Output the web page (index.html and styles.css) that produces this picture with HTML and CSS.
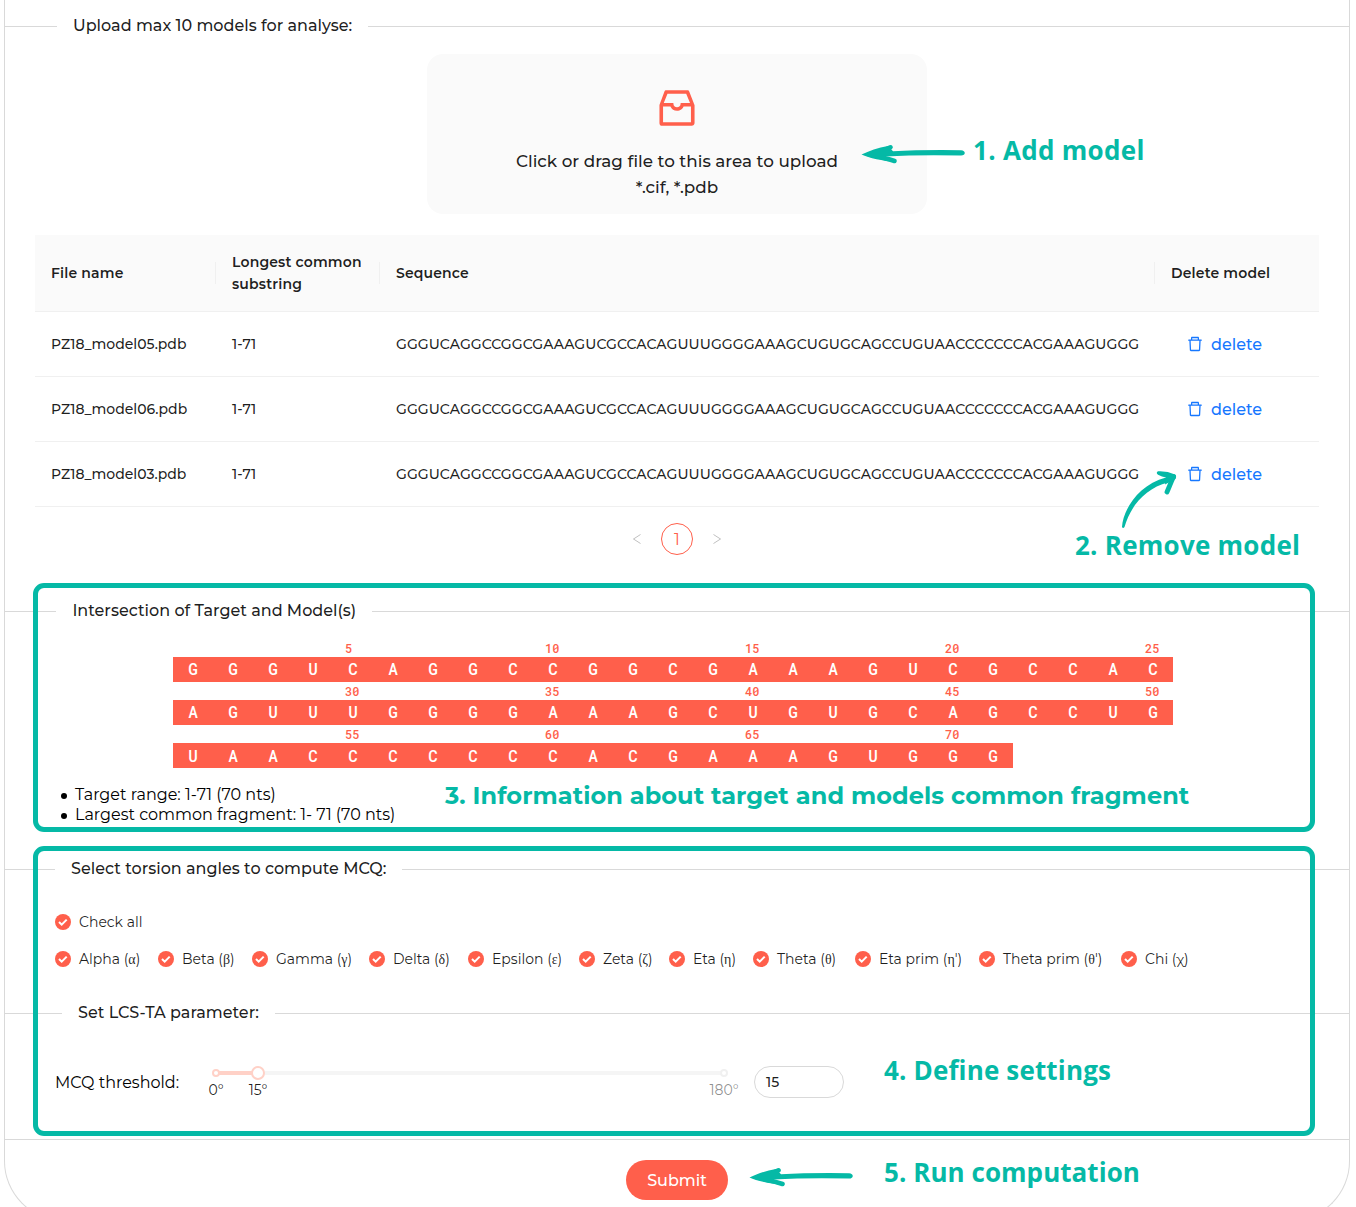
FILE: index.html
```html
<!DOCTYPE html>
<html lang="en">
<head>
<meta charset="utf-8">
<title>Model upload</title>
<link rel="stylesheet" href="styles.css">
</head>
<body>
<svg class="defs" aria-hidden="true">
  <symbol id="trash" viewBox="64 64 896 896"><path d="M360 184h-8c4.400 0 8-3.600 8-8v8h304v-8c0 4.400 3.600 8 8 8h-8v72h72v-80c0-35.300-28.700-64-64-64H352c-35.300 0-64 28.700-64 64v80h72v-72zm504 72H160c-17.700 0-32 14.300-32 32v32c0 4.400 3.600 8 8 8h60.400l24.700 523c1.600 34.100 29.800 61 63.900 61h454c34.200 0 62.300-26.800 63.900-61l24.700-523H888c4.400 0 8-3.600 8-8v-32c0-17.700-14.300-32-32-32zM731.300 840H292.700l-24.200-512h487l-24.200 512z"/></symbol>
  <symbol id="check" viewBox="0 0 16 16"><circle cx="8" cy="8" r="8"/><path d="M4 8l2.700 2.700 5-5.100" fill="none" stroke="#fff" stroke-width="2"/></symbol>
  <symbol id="arrow" viewBox="0 0 106 22"><path d="M8 11.500C18 9 25 7 29.500 4.300M8 11.500C18 13.500 26 15.500 33.500 18" fill="none" stroke="#05b9a6" stroke-width="4.600" stroke-linecap="round"/><path d="M.5 11.500C8 8 17 4.500 27 3L32 8.200Q60 6.700 100 7.200C105 7.500 105 12.300 100 12.600Q60 11.500 24 13.600L34 19C22 18 8 15 .5 11.500Z" fill="#05b9a6"/></symbol>
</svg>
<main class="panel">
  <div class="divider divider-upload"><span>Upload max 10 models for analyse:</span></div>

  <section class="dropzone">
    <svg class="inbox" viewBox="0 0 1024 1024"><path d="M885.200 446.300l-.2-.8-112.200-285.100c-5-16.100-19.900-27.200-36.800-27.200H281.200c-17 0-32.100 11.300-36.900 27.600L139.400 443l-.3.7-.2.8c-1.300 4.900-1.700 9.900-1 14.800-.1 1.600-.2 3.200-.2 4.800V830a60.900 60.900 0 0060.800 60.800h627.200c33.500 0 60.800-27.300 60.900-60.800V464.100c0-1.300 0-2.600-.1-3.700.4-4.900 0-9.600-1.300-14.100zm-295.800-43l-.3 15.700c-.8 44.900-31.800 75.100-77.100 75.100-22.100 0-41.100-7.100-54.800-20.600S436 441.200 435.600 419l-.3-15.700H229.500L309 210h399.200l81.700 193.300H589.400zm-375 76.800h157.300c24.300 57.100 76 90.800 140.400 90.800 33.700 0 65-9.400 90.300-27.200 22.200-15.600 39.500-37.400 50.700-63.600h156.500V814H214.400V480.100z"/></svg>
    <p>Click or drag file to this area to upload</p>
    <p>*.cif, *.pdb</p>
  </section>

  <table class="models">
    <thead>
      <tr><th class="c-name">File name</th><th class="c-lcs">Longest common substring</th><th class="c-seq">Sequence</th><th class="c-del">Delete model</th></tr>
    </thead>
    <tbody>
      <tr><td>PZ18_model05.pdb</td><td>1-71</td><td class="rna">GGGUCAGGCCGGCGAAAGUCGCCACAGUUUGGGGAAAGCUGUGCAGCCUGUAACCCCCCCACGAAAGUGGG</td><td><a class="delete"><svg><use href="#trash"/></svg><span>delete</span></a></td></tr>
      <tr><td>PZ18_model06.pdb</td><td>1-71</td><td class="rna">GGGUCAGGCCGGCGAAAGUCGCCACAGUUUGGGGAAAGCUGUGCAGCCUGUAACCCCCCCACGAAAGUGGG</td><td><a class="delete"><svg><use href="#trash"/></svg><span>delete</span></a></td></tr>
      <tr><td>PZ18_model03.pdb</td><td>1-71</td><td class="rna">GGGUCAGGCCGGCGAAAGUCGCCACAGUUUGGGGAAAGCUGUGCAGCCUGUAACCCCCCCACGAAAGUGGG</td><td><a class="delete"><svg><use href="#trash"/></svg><span>delete</span></a></td></tr>
    </tbody>
  </table>

  <nav class="pager">
    <svg viewBox="0 0 10 12"><path d="M8.500 1.500L1.500 6l7 4.500"/></svg>
    <span class="page">1</span>
    <svg viewBox="0 0 10 12"><path d="M1.500 1.500L8.500 6l-7 4.500"/></svg>
  </nav>

  <div class="divider divider-intersection"><span>Intersection of Target and Model(s)</span></div>

  <section class="sequence">
    <div class="ticks"><i>5</i><i>10</i><i>15</i><i>20</i><i>25</i></div>
    <div class="bases"><b>G</b><b>G</b><b>G</b><b>U</b><b>C</b><b>A</b><b>G</b><b>G</b><b>C</b><b>C</b><b>G</b><b>G</b><b>C</b><b>G</b><b>A</b><b>A</b><b>A</b><b>G</b><b>U</b><b>C</b><b>G</b><b>C</b><b>C</b><b>A</b><b>C</b></div>
    <div class="ticks"><i>30</i><i>35</i><i>40</i><i>45</i><i>50</i></div>
    <div class="bases"><b>A</b><b>G</b><b>U</b><b>U</b><b>U</b><b>G</b><b>G</b><b>G</b><b>G</b><b>A</b><b>A</b><b>A</b><b>G</b><b>C</b><b>U</b><b>G</b><b>U</b><b>G</b><b>C</b><b>A</b><b>G</b><b>C</b><b>C</b><b>U</b><b>G</b></div>
    <div class="ticks"><i>55</i><i>60</i><i>65</i><i>70</i></div>
    <div class="bases last"><b>U</b><b>A</b><b>A</b><b>C</b><b>C</b><b>C</b><b>C</b><b>C</b><b>C</b><b>C</b><b>A</b><b>C</b><b>G</b><b>A</b><b>A</b><b>A</b><b>G</b><b>U</b><b>G</b><b>G</b><b>G</b></div>
  </section>

  <ul class="ranges">
    <li>Target range: 1-71 (70 nts)</li>
    <li>Largest common fragment: 1- 71 (70 nts)</li>
  </ul>

  <div class="divider divider-angles"><span>Select torsion angles to compute MCQ:</span></div>

  <section class="angles">
    <label><svg><use href="#check"/></svg>Check all</label>
    <div class="angle-list">
      <label><svg><use href="#check"/></svg>Alpha (α)</label>
      <label><svg><use href="#check"/></svg>Beta (β)</label>
      <label><svg><use href="#check"/></svg>Gamma (γ)</label>
      <label><svg><use href="#check"/></svg>Delta (δ)</label>
      <label><svg><use href="#check"/></svg>Epsilon (ε)</label>
      <label><svg><use href="#check"/></svg>Zeta (ζ)</label>
      <label><svg><use href="#check"/></svg>Eta (η)</label>
      <label><svg><use href="#check"/></svg>Theta (θ)</label>
      <label><svg><use href="#check"/></svg>Eta prim (η')</label>
      <label><svg><use href="#check"/></svg>Theta prim (θ')</label>
      <label><svg><use href="#check"/></svg>Chi (χ)</label>
    </div>
  </section>

  <div class="divider divider-lcs"><span>Set LCS-TA parameter:</span></div>

  <section class="threshold">
    <span class="threshold-label">MCQ threshold:</span>
    <div class="slider">
      <div class="rail"><span class="fill"></span><span class="dot active"></span><span class="handle"></span><span class="dot end"></span></div>
      <div class="marks"><span>0°</span><span>15°</span><span class="off">180°</span></div>
    </div>
    <div class="number">15</div>
  </section>

  <footer class="actions"><button type="button">Submit</button></footer>
</main>

<div class="callout frame-info"></div>
<div class="callout frame-settings"></div>
<p class="note note-1">1. Add model</p>
<p class="note note-2">2. Remove model</p>
<p class="note note-3">3. Information about target and models common fragment</p>
<p class="note note-4">4. Define settings</p>
<p class="note note-5">5. Run computation</p>
<svg class="arrow arrow-1"><use href="#arrow"/></svg>
<svg class="arrow arrow-5"><use href="#arrow"/></svg>
<svg class="arrow-2" viewBox="0 0 60 60"><path d="M4 58C5 41 20 16 48 8.500L50 13.500C28 19 13 36 6.500 58Q5 60 4 58Z" fill="#05b9a6"/><path d="M49 23L55.500 7.500" fill="none" stroke="#05b9a6" stroke-width="4.800" stroke-linecap="round"/><path d="M40 2.300Q49 1.800 57 5.500Q59 7 57.500 10L47 15.500L48 8.500Q44 8 40 5.800Q37.500 4 40 2.300Z" fill="#05b9a6"/></svg>
</body>
</html>
```
FILE: styles.css
```css
* { box-sizing: border-box; }
body {
  margin: 0;
  position: relative;
  height: 1207px;
  overflow: hidden;
  background: #fff;
  font-family: Montserrat, "Liberation Serif", sans-serif;
  font-size: 14px;
  color: rgba(0, 0, 0, .88);
}
p { margin: 0; }
.defs { position: absolute; width: 0; height: 0; }

.panel {
  margin: 0 6px 0 4px;
  padding-top: 13px;
  height: 1221px;
  border: 1px solid #d9d9d9;
  border-top: 0;
  border-radius: 0 0 60px 60px;
}

.divider {
  display: flex;
  align-items: center;
  height: 26px;
  font-size: 16px;
  font-weight: 500;
  white-space: nowrap;
}
.divider span { padding: 0 16px; line-height: 24px; margin-top: -1px; }
.divider::before, .divider::after { content: ""; height: 1px; background: #d9d9d9; margin-top: 1px; }
.divider::before { width: 52px; }
.divider::after { flex: 1; }
.divider-intersection::before { width: 51.400px; }
.divider-angles::before { width: 50px; }
.divider-lcs::before { width: 57px; }

.dropzone {
  display: flex;
  flex-direction: column;
  align-items: center;
  width: 500px;
  height: 160px;
  margin: 15px auto 21px;
  padding-top: 30px;
  border-radius: 16px;
  background: #fafafa;
  font-size: 16.800px;
  font-weight: 500;
  line-height: 26px;
}
.inbox { width: 48px; height: 48px; margin-bottom: 16px; fill: #ff5f4b; }

.models {
  width: 1284px;
  margin-left: 30px;
  border-collapse: separate;
  border-spacing: 0;
  table-layout: fixed;
  line-height: 22px;
}
.models th, .models td { padding: 0 16px; text-align: left; border-bottom: 1px solid #f0f0f0; }
.models th {
  height: 77px;
  font-weight: 600;
  letter-spacing: .15px;
  background: linear-gradient(#f0f0f0, #f0f0f0) right center / 1px 22px no-repeat #fafafa;
}
.models th:last-child { background: #fafafa; }
.models td { height: 65px; font-weight: 500; }
.models .rna { letter-spacing: .09px; white-space: nowrap; }
.c-name { width: 181px; }
.c-lcs { width: 164px; }
.c-seq { width: 775px; }
.delete { display: flex; align-items: center; gap: 8px; padding-left: 16px; color: #1677ff; font-size: 16px; }
.delete span { padding-top: 1px; line-height: 23px; }
.delete svg { width: 16px; height: 16px; fill: currentColor; }

.pager { display: flex; justify-content: center; align-items: center; gap: 19px; margin: 16px 0 43px; }
.pager svg { width: 10px; height: 12px; fill: none; stroke: rgba(0, 0, 0, .25); }
.page { width: 32px; height: 32px; border: 1px solid #ff5f4b; border-radius: 50%; text-align: center; line-height: 31px; font-size: 16px; color: #ff5f4b; }

.sequence { width: 1000px; margin: 17px 0 0 168px; font-family: "Roboto Mono", Roboto, sans-serif; font-weight: 500; }
.ticks { display: grid; grid-template-columns: repeat(5, 200px); height: 18px; padding-left: 172px; margin-right: -200px; font-size: 12px; line-height: 18px; color: #ff5f4b; }
.ticks:first-child { height: 16px; line-height: 14px; }
.ticks i { font-style: normal; }
.bases { display: grid; grid-template-columns: repeat(25, 40px); height: 25px; background: #ff5f4b; color: #fff; font-size: 16px; line-height: 23px; text-align: center; }
.bases.last { width: 840px; line-height: 25px; }
.bases b { font-weight: 500; }

.ranges { margin: 17px 0 31px; padding-left: 56px; list-style: none; font-size: 16px; line-height: 20px; color: #000; }
.ranges li { display: flex; align-items: center; gap: 8px; }
.ranges li::before { content: ""; width: 6px; height: 6px; margin-top: 1px; border-radius: 50%; background: #000; }

.angles { margin: 29px 0 30px 50px; }
.angles label { display: flex; align-items: center; gap: 8px; height: 22px; white-space: nowrap; }
.angles svg { width: 16px; height: 16px; fill: #ff5f4b; }
.angle-list { display: grid; grid-template-columns: 103px 94px 117px 99px 111px 90px 84px 102px 124px 142px auto; margin-top: 15px; }

.threshold { display: flex; align-items: center; height: 32px; margin: 40px 0 41px 50px; }
.threshold-label { width: 161px; font-size: 16px; color: #000; }
.slider { width: 508px; margin-right: 30px; padding-top: 8px; }
.rail { position: relative; height: 4px; background: #f5f5f5; border-radius: 2px; }
.fill { display: block; width: 42px; height: 4px; background: #ffd1c7; }
.dot, .handle { position: absolute; background: #fff; border-radius: 50%; }
.dot { top: -2px; left: -4px; width: 8px; height: 8px; border: 2px solid #f0f0f0; }
.dot.active { border-color: #ffd1c7; }
.dot.end { left: 504px; }
.handle { left: 35px; top: -5px; width: 14px; height: 14px; border: 2px solid #ffd1c7; }
.marks { display: flex; height: 22px; margin-top: 4px; line-height: 23px; }
.marks span { width: 42px; margin-left: -21px; margin-right: 21px; text-align: center; }
.marks .off { margin-left: 403px; margin-right: -21px; color: rgba(0, 0, 0, .45); }
.number { width: 90px; height: 32px; padding: 0 11px; border: 1px solid #d9d9d9; border-radius: 16px; line-height: 30px; font-weight: 500; }

.actions { border-top: 1px solid #d9d9d9; padding-top: 20px; text-align: center; }
.actions button { width: 102px; height: 40px; border: 0; border-radius: 20px; background: #ff5f4b; color: #fff; font: 500 16px Montserrat, Inter, sans-serif; }

.callout { position: absolute; left: 33px; width: 1282px; border: 5px solid #05b9a6; border-radius: 11px; }
.frame-info { top: 583px; height: 249px; }
.frame-settings { top: 846px; height: 290px; }
.note { position: absolute; font: 700 26px/36px "Open Sans", sans-serif; color: #05b9a6; white-space: nowrap; }
.note-1 { left: 973px; top: 132px; letter-spacing: .3px; }
.note-2 { left: 1075px; top: 527px; letter-spacing: .25px; }
.note-3 { left: 445px; top: 778px; font: 700 24px/36px Montserrat, sans-serif; letter-spacing: .08px; }
.note-4 { left: 884px; top: 1052px; letter-spacing: .15px; }
.note-5 { left: 884px; top: 1154px; letter-spacing: .05px; }
.arrow { position: absolute; width: 106px; height: 22px; }
.arrow-1 { left: 861px; top: 143px; }
.arrow-5 { left: 749px; top: 1166px; }
.arrow-2 { position: absolute; left: 1118px; top: 469px; width: 60px; height: 60px; }
```
